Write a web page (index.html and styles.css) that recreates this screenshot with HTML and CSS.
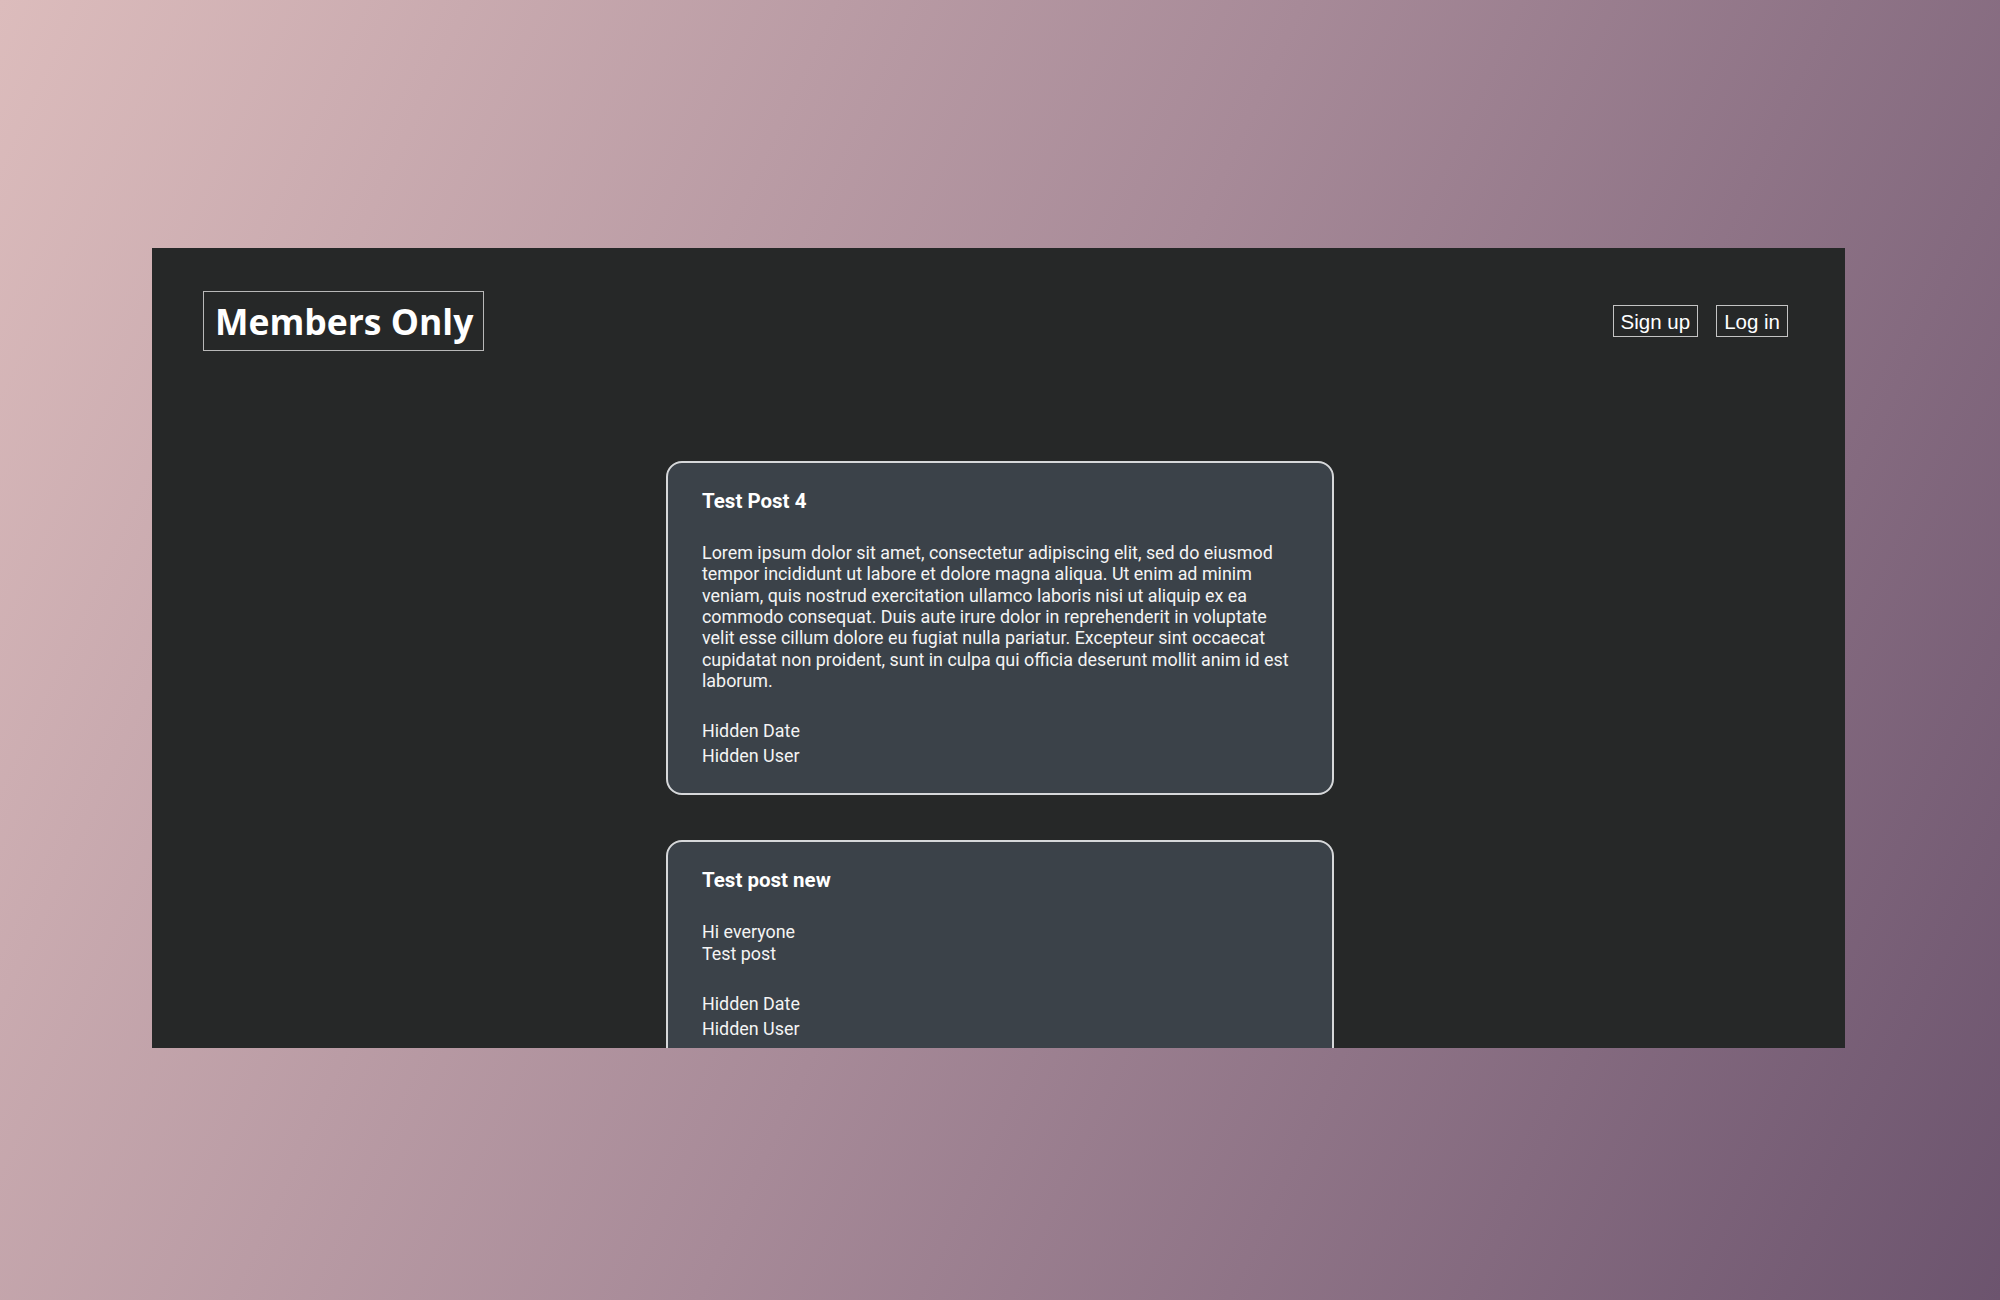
FILE: index.html
```html
<!DOCTYPE html>
<html lang="en">
<head>
<meta charset="utf-8">
<title>Members Only</title>
<link rel="stylesheet" href="styles.css">
</head>
<body>
<div class="window">
  <header class="topbar">
    <h1 class="logo">Members Only</h1>
    <nav class="nav">
      <a class="nav-btn" href="#">Sign up</a>
      <a class="nav-btn" href="#">Log in</a>
    </nav>
  </header>
  <main class="feed">
    <article class="post">
      <h3 class="post-title">Test Post 4</h3>
      <p class="post-body">Lorem ipsum dolor sit amet, consectetur adipiscing elit, sed do eiusmod tempor incididunt ut labore et dolore magna aliqua. Ut enim ad minim veniam, quis nostrud exercitation ullamco laboris nisi ut aliquip ex ea commodo consequat. Duis aute irure dolor in reprehenderit in voluptate velit esse cillum dolore eu fugiat nulla pariatur. Excepteur sint occaecat cupidatat non proident, sunt in culpa qui officia deserunt mollit anim id est laborum.</p>
      <div class="post-meta">
        <div>Hidden Date</div>
        <div>Hidden User</div>
      </div>
    </article>
    <article class="post">
      <h3 class="post-title">Test post new</h3>
      <p class="post-body">Hi everyone<br>Test post</p>
      <div class="post-meta">
        <div>Hidden Date</div>
        <div>Hidden User</div>
      </div>
    </article>
  </main>
</div>
</body>
</html>
```
FILE: styles.css
```css
html, body {
  margin: 0;
  padding: 0;
}
body {
  width: 2000px;
  height: 1300px;
  overflow: hidden;
  background: linear-gradient(115deg, #dcbcbc 0%, #a78a98 50%, #6c546e 100%);
  font-family: Roboto, "Liberation Sans", sans-serif;
}
.window {
  margin: 248px 0 0 152px;
  width: 1693px;
  height: 800px;
  overflow: hidden;
  background: #262828;
  color: #f4f4f4;
}
.topbar {
  display: flex;
  justify-content: space-between;
  align-items: center;
  padding: 43px 57px 0 51px;
}
.logo {
  margin: 0;
  font-family: "Open Sans", sans-serif;
  font-weight: 700;
  font-size: 35.5px;
  line-height: 48px;
  color: #ffffff;
  border: 1px solid #b8b8b8;
  padding: 5px 10px 5px 11px;
}
.nav {
  display: flex;
  gap: 18px;
}
.nav-btn {
  font-family: "Liberation Sans", Arial, sans-serif;
  font-size: 20.5px;
  line-height: 23px;
  color: #ffffff;
  text-decoration: none;
  border: 1px solid #c4c4c4;
  padding: 4px 7px 3px;
}
.feed {
  display: flex;
  flex-direction: column;
  align-items: center;
  gap: 45px;
  margin-top: 110px;
  padding-left: 3px;
}
.post {
  box-sizing: border-box;
  width: 668px;
  background: #3b4249;
  border: 2px solid #d6d8da;
  border-radius: 16px;
  padding: 25px 34px 25px;
}
.post-title {
  margin: 0;
  font-size: 20.5px;
  font-weight: 700;
  line-height: 26px;
  color: #ffffff;
}
.post-body {
  margin: 28px 0 0;
  font-size: 17.9px;
  line-height: 21.33px;
}
.post-meta {
  margin-top: 27px;
  font-size: 17.9px;
  line-height: 25px;
}
```
